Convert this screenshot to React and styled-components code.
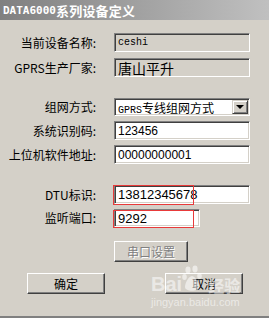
import React from 'react';
import styled, { createGlobalStyle } from 'styled-components';

const Global = createGlobalStyle`
  html, body {
    margin: 0;
    padding: 0;
    background: #d4d0c8;
  }
`;

const Window = styled.div`
  position: relative;
  width: 269px;
  height: 318px;
  box-sizing: border-box;
  background: #d4d0c8;
  border-bottom: 2px solid #808080;
  font-family: 'Noto Sans CJK SC', 'Liberation Sans', sans-serif;
  font-size: 12px;
  color: #000;
  overflow: hidden;
`;

const TitleBar = styled.div`
  height: 20px;
  display: flex;
  align-items: center;
  padding-left: 3px;
  background: linear-gradient(to right, #808080, #c0c0c0);
  color: #fff;
  font-weight: bold;
  font-size: 13px;
  letter-spacing: 0.2px;

  .latin {
    font-family: 'DejaVu Sans Mono', monospace;
    font-size: 11px;
    letter-spacing: 0;
  }
`;

const Form = styled.div`
  padding-top: 13px;
  display: flex;
  flex-direction: column;
`;

const Group = styled.div`
  display: flex;
  flex-direction: column;
  gap: ${(p) => p.$gap ?? 6}px;
  margin-top: ${(p) => p.$top ?? 0}px;
`;

const Row = styled.div`
  display: grid;
  grid-template-columns: 96px auto;
  column-gap: 18px;
  align-items: center;
`;

const Label = styled.div`
  text-align: right;
  white-space: nowrap;
  line-height: 1;
`;

const Field = styled.div`
  position: relative;
  box-sizing: border-box;
  width: ${(p) => p.$w ?? 136}px;
  height: ${(p) => p.$h ?? 19}px;
  background: ${(p) => (p.$disabled ? '#d4d0c8' : '#fff')};
  border-top: 1px solid #808080;
  border-left: 1px solid #808080;
  border-right: 1px solid #fff;
  border-bottom: 1px solid #fff;
  box-shadow: inset 1px 1px 0 #404040, inset -1px -1px 0 #d4d0c8;
  display: flex;
  align-items: center;
  padding-left: 3px;
  font-family: ${(p) => (p.$mono ? "'Liberation Mono', monospace" : "'Liberation Sans', 'Noto Sans CJK SC', sans-serif")};
  font-size: ${(p) => p.$size ?? 12}px;
  white-space: nowrap;
`;

const SelectText = styled.span`
  flex: 1;
  font-family: 'Noto Sans CJK SC', sans-serif;
  font-size: 12px;

  .latin {
    font-family: 'Liberation Mono', monospace;
    font-size: 10px;
  }
`;

const ArrowButton = styled.div`
  width: 16px;
  height: 14px;
  margin-right: 1px;
  box-sizing: border-box;
  background: #d4d0c8;
  border-top: 1px solid #d4d0c8;
  border-left: 1px solid #d4d0c8;
  border-right: 1px solid #404040;
  border-bottom: 1px solid #404040;
  box-shadow: inset 1px 1px 0 #fff, inset -1px -1px 0 #808080;
  display: flex;
  align-items: center;
  justify-content: center;

  &::after {
    content: '';
    border-left: 4px solid transparent;
    border-right: 4px solid transparent;
    border-top: 4px solid #000;
  }
`;

const Mark = styled.div`
  position: absolute;
  left: -2px;
  top: ${(p) => p.$top}px;
  width: 81px;
  height: ${(p) => p.$h}px;
  border: 1px solid #e83a3a;
  box-sizing: border-box;
  pointer-events: none;
`;

const Button = styled.div`
  box-sizing: border-box;
  width: ${(p) => p.$w}px;
  height: 21px;
  background: #d4d0c8;
  border-top: 1px solid #fff;
  border-left: 1px solid #fff;
  border-right: 1px solid #404040;
  border-bottom: 1px solid #404040;
  box-shadow: inset -1px -1px 0 #808080;
  display: flex;
  align-items: center;
  justify-content: center;
  font-size: 12px;
  color: ${(p) => (p.$disabled ? '#808080' : '#000')};
  text-shadow: ${(p) => (p.$disabled ? '1px 1px 0 #fff' : 'none')};
`;

const ButtonRow = styled.div`
  display: flex;
  justify-content: ${(p) => p.$justify ?? 'flex-start'};
  padding-left: ${(p) => p.$left ?? 0}px;
  padding-right: ${(p) => p.$right ?? 0}px;
  margin-top: ${(p) => p.$top ?? 0}px;
`;

const Watermark = styled.div`
  position: absolute;
  left: 151px;
  top: 262px;
  width: 95px;
  color: rgba(255, 255, 255, 0.55);
  pointer-events: none;
`;

const WmTop = styled.div`
  display: flex;
  align-items: flex-end;
  height: 32px;
  font-family: 'Liberation Sans', sans-serif;
  font-weight: bold;
  font-size: 20px;
  line-height: 1;

  .cn {
    font-family: 'Noto Sans CJK SC', sans-serif;
    font-size: 16px;
    margin-left: 6px;
    padding-bottom: 1px;
  }
`;

const WmUrl = styled.div`
  font-family: 'Liberation Sans', sans-serif;
  font-size: 11px;
  margin-top: 2px;
`;

function Paw() {
  return (
    <svg width="20" height="30" viewBox="0 0 20 30" fill="rgba(255,255,255,0.55)">
      <ellipse cx="6" cy="6" rx="2.6" ry="3.4" />
      <ellipse cx="13" cy="5" rx="2.6" ry="3.4" />
      <ellipse cx="2.5" cy="13" rx="2.3" ry="3" />
      <ellipse cx="17.5" cy="12" rx="2.3" ry="3" />
      <path d="M10 12 C6 13 3 19 3 23 C3 28 17 28 17 23 C17 19 14 13 10 12 Z" />
    </svg>
  );
}

export default function App() {
  return (
    <>
      <Global />
      <Window>
        <TitleBar>
          <span className="latin">DATA6000</span>系列设备定义
        </TitleBar>
        <Form>
          <Group>
            <Row>
              <Label>当前设备名称:</Label>
              <Field $disabled $mono $size={10}>ceshi</Field>
            </Row>
            <Row>
              <Label>GPRS生产厂家:</Label>
              <Field $disabled $size={14}>唐山平升</Field>
            </Row>
          </Group>

          <Group $top={21} $gap={5}>
            <Row>
              <Label>组网方式:</Label>
              <Field $h={18}>
                <SelectText>
                  <span className="latin">GPRS</span>专线组网方式
                </SelectText>
                <ArrowButton />
              </Field>
            </Row>
            <Row>
              <Label>系统识别码:</Label>
              <Field>123456</Field>
            </Row>
            <Row>
              <Label>上位机软件地址:</Label>
              <Field>00000000001</Field>
            </Row>
          </Group>

          <Group $top={21} $gap={5}>
            <Row>
              <Label>DTU标识:</Label>
              <Field $size={13}>
                13812345678
                <Mark $top={-1} $h={20} />
              </Field>
            </Row>
            <Row>
              <Label>监听端口:</Label>
              <Field $w={86} $h={18} $size={13}>
                9292
                <Mark $top={0} $h={18} />
              </Field>
            </Row>
          </Group>

          <ButtonRow $left={114} $top={14}>
            <Button $w={74} $disabled>串口设置</Button>
          </ButtonRow>

          <ButtonRow $left={27} $right={26} $top={11} $justify="space-between">
            <Button $w={78}>确定</Button>
            <Button $w={78}>取消</Button>
          </ButtonRow>
        </Form>

        <Watermark>
          <WmTop>
            <span>Bai</span>
            <Paw />
            <span className="cn">经验</span>
          </WmTop>
          <WmUrl>jingyan.baidu.com</WmUrl>
        </Watermark>
      </Window>
    </>
  );
}
